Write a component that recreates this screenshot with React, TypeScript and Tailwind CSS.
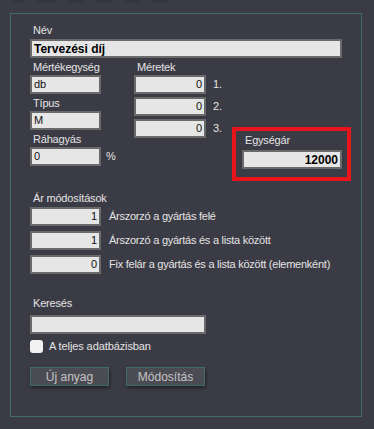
import React from 'react';

const font = { fontFamily: '"Liberation Sans", Arial, sans-serif' };

const Label = ({ children, className = '' }: { children: React.ReactNode; className?: string }) => (
  <div className={`h-[14px] text-[11px] leading-[14px] tracking-[-0.2px] text-[#e4e4e4] ${className}`}>{children}</div>
);

const Field = ({
  value = '',
  width,
  align = 'left',
  bold = false,
}: {
  value?: string;
  width: string;
  align?: 'left' | 'right';
  bold?: boolean;
}) => (
  <div
    className={`${width} h-[19px] bg-[#e6e6e6] border-2 border-[#6a6a6a] flex items-center px-[2px] text-[11px] text-[#111] ${
      align === 'right' ? 'justify-end' : 'justify-start'
    } ${bold ? 'font-bold text-[12px] text-black' : ''}`}
  >
    {value}
  </div>
);

const Button = ({ children }: { children: React.ReactNode }) => (
  <div className="w-[79px] h-[19px] bg-[#4b4b53] border border-[#3f6b68] shadow-[1px_2px_3px_rgba(0,0,0,0.45)] flex items-center justify-center text-[12px] text-[#c4c4c4]">
    {children}
  </div>
);

const modifiers = [
  { value: '1', text: 'Árszorzó a gyártás felé' },
  { value: '1', text: 'Árszorzó a gyártás és a lista között' },
  { value: '0', text: 'Fix felár a gyártás és a lista között (elemenként)' },
];

const App = () => {
  return (
    <div className="w-[374px] h-[429px] bg-[#3b3b45] overflow-hidden" style={font}>
      {/* faint tab shadows at the top */}
      <div className="flex h-[3px] pl-[13px] gap-[12px]">
        <div className="w-[12px] bg-[#35353e]" />
        <div className="w-[18px] bg-[#35353e]" />
        <div className="w-[17px] bg-[#35353e]" />
        <div className="w-[17px] bg-[#35353e]" />
        <div className="w-[15px] bg-[#35353e]" />
        <div className="w-[15px] bg-[#35353e]" />
      </div>

      <div className="ml-[10px] mt-[10px] w-[352px] h-[404px] border border-[#3f6b6b] pl-[19px] pt-[9px]">
        <Label className="pl-[3px]">Név</Label>
        <div className="mt-[2px]">
          <Field value="Tervezési díj" width="w-[312px]" bold />
        </div>

        <div className="flex mt-[2px]">
          <div className="w-[71px]">
            <Label className="pl-[3px]">Mértékegység</Label>
            <div className="mt-[1px]">
              <Field value="db" width="w-[71px]" />
            </div>
            <Label className="pl-[3px] mt-[2px]">Típus</Label>
            <div className="mt-[1px]">
              <Field value="M" width="w-[71px]" />
            </div>
            <Label className="pl-[3px] mt-[2px]">Ráhagyás</Label>
            <div className="mt-[1px] flex items-center">
              <Field value="0" width="w-[71px] shrink-0" />
              <span className="ml-[5px] text-[11px] text-[#e4e4e4]">%</span>
            </div>
          </div>

          <div className="ml-[33px] w-[86px]">
            <Label className="pl-[3px]">Méretek</Label>
            <div className="mt-[1px] flex flex-col gap-[3px]">
              {['1.', '2.', '3.'].map((n) => (
                <div key={n} className="flex items-center">
                  <Field value="0" width="w-[72px] shrink-0" align="right" />
                  <span className="ml-[7px] text-[11px] text-[#e4e4e4]">{n}</span>
                </div>
              ))}
            </div>
          </div>

          <div className="ml-[12px] mt-[67px] w-[119px] h-[54px] border-4 border-[#e8141c] pl-[6px] pt-[2px]">
            <Label className="pl-[3px]">Egységár</Label>
            <div className="mt-[3px]">
              <Field value="12000" width="w-[100px]" align="right" bold />
            </div>
          </div>
        </div>

        <Label className="pl-[3px] mt-[10px]">Ár módosítások</Label>
        <div className="mt-[2px] flex flex-col gap-[5px]">
          {modifiers.map((m) => (
            <div key={m.text} className="flex items-center">
              <Field value={m.value} width="w-[71px] shrink-0" align="right" />
              <span className="ml-[8px] text-[11px] tracking-[-0.25px] text-[#e4e4e4]">{m.text}</span>
            </div>
          ))}
        </div>

        <Label className="pl-[3px] mt-[22px]">Keresés</Label>
        <div className="mt-[5px]">
          <Field width="w-[176px]" />
        </div>
        <div className="mt-[6px] h-[13px] flex items-center">
          <div className="w-[13px] h-[13px] rounded-[3px] bg-[#f2f2f2]" />
          <span className="ml-[6px] text-[11px] tracking-[-0.1px] text-[#e4e4e4]">A teljes adatbázisban</span>
        </div>
        <div className="mt-[14px] flex gap-[17px]">
          <Button>Új anyag</Button>
          <Button>Módosítás</Button>
        </div>
      </div>
    </div>
  );
};

export default App;
